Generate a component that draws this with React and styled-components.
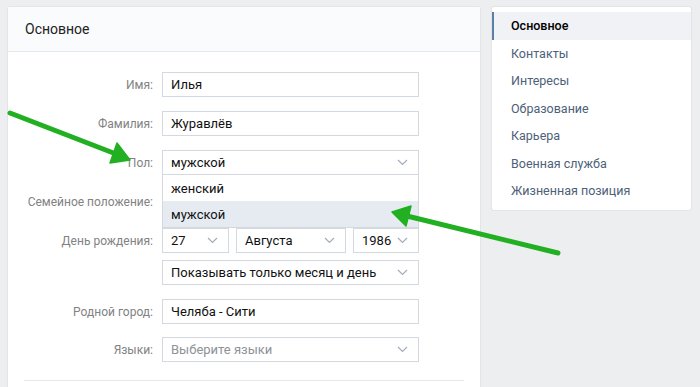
import React from 'react';
import styled, { createGlobalStyle } from 'styled-components';

const GlobalStyle = createGlobalStyle`
  html, body {
    margin: 0;
    padding: 0;
    background: #edeef0;
    font-family: Roboto, "Open Sans", "Liberation Sans", sans-serif;
    -webkit-font-smoothing: antialiased;
  }
`;

const Page = styled.div`
  position: relative;
  display: flex;
  align-items: flex-start;
  gap: 12px;
  padding: 7px 8px 0;
  height: 380px;
  overflow: hidden;
`;

const MainCard = styled.div`
  width: 472px;
  background: #fff;
  border-radius: 2px;
  box-shadow: 0 0 0 1px #e3e4e8;
  padding-bottom: 40px;
`;

const CardHeader = styled.div`
  height: 44px;
  display: flex;
  align-items: center;
  padding-left: 17px;
  background: #fafbfc;
  border-bottom: 1px solid #e7e8ec;
  font-size: 14px;
  color: #222;
`;

const Form = styled.div`
  display: flex;
  flex-direction: column;
  padding-top: 20px;
`;

const Row = styled.div`
  position: relative;
  display: flex;
  align-items: center;
  gap: 9px;
  margin-bottom: ${p => p.$gap ?? 14}px;
`;

const Label = styled.div`
  width: 145px;
  text-align: right;
  font-size: 12px;
  color: #828282;
`;

const Field = styled.div`
  box-sizing: border-box;
  width: ${p => p.$w || 257}px;
  height: 25px;
  display: flex;
  align-items: center;
  justify-content: space-between;
  padding: 0 10px 0 8px;
  border: 1px solid #d3d9de;
  background: #fff;
  font-size: 13px;
  color: ${p => (p.$placeholder ? '#8d9297' : '#111')};
`;

const Controls = styled.div`
  display: flex;
  gap: 7px;
`;

const Dropdown = styled.div`
  position: absolute;
  left: 154px;
  top: 25px;
  width: 257px;
  box-sizing: border-box;
  background: #fff;
  border: 1px solid #d3d9de;
  border-top: none;
  z-index: 2;
`;

const Option = styled.div`
  height: 26px;
  display: flex;
  align-items: center;
  padding-left: 8px;
  font-size: 13px;
  color: #111;
  background: ${p => (p.$active ? '#e5ebf1' : '#fff')};
`;

const Divider = styled.div`
  margin: 5px 16px 0;
  border-top: 1px solid #e7e8ec;
`;

const SideMenu = styled.div`
  width: 199px;
  background: #fff;
  border-radius: 2px;
  box-shadow: 0 0 0 1px #e3e4e8;
  padding: 5px 0;
`;

const MenuItem = styled.div`
  height: 27.5px;
  display: flex;
  align-items: center;
  padding-left: 17px;
  border-left: 2px solid ${p => (p.$active ? '#5b7fa6' : 'transparent')};
  background: ${p => (p.$active ? '#f0f2f5' : 'transparent')};
  font-size: 12.5px;
  font-weight: ${p => (p.$active ? 500 : 400)};
  color: ${p => (p.$active ? '#000' : '#4d6178')};
`;

const Overlay = styled.svg`
  position: absolute;
  left: 0;
  top: 0;
  pointer-events: none;
  z-index: 5;
`;

const Chevron = () => (
  <svg width="11" height="7" viewBox="0 0 11 7">
    <polyline points="1,1 5.5,5.5 10,1" fill="none" stroke="#a3adb8" strokeWidth="1.2" />
  </svg>
);

const Select = ({ children, w, placeholder }) => (
  <Field $w={w} $placeholder={placeholder}>
    <span>{children}</span>
    <Chevron />
  </Field>
);

const menu = ['Основное', 'Контакты', 'Интересы', 'Образование', 'Карьера', 'Военная служба', 'Жизненная позиция'];

export default function App() {
  return (
    <>
      <GlobalStyle />
      <Page>
        <MainCard>
          <CardHeader>Основное</CardHeader>
          <Form>
            <Row>
              <Label>Имя:</Label>
              <Field>Илья</Field>
            </Row>
            <Row>
              <Label>Фамилия:</Label>
              <Field>Журавлёв</Field>
            </Row>
            <Row>
              <Label>Пол:</Label>
              <Select>мужской</Select>
              <Dropdown>
                <Option>женский</Option>
                <Option $active>мужской</Option>
              </Dropdown>
            </Row>
            <Row>
              <Label>Семейное положение:</Label>
              <Select />
            </Row>
            <Row $gap={7}>
              <Label>День рождения:</Label>
              <Controls>
                <Select w={67}>27</Select>
                <Select w={110}>Августа</Select>
                <Select w={66}>1986</Select>
              </Controls>
            </Row>
            <Row>
              <Label />
              <Select>Показывать только месяц и день</Select>
            </Row>
            <Row $gap={13}>
              <Label>Родной город:</Label>
              <Field>Челяба - Сити</Field>
            </Row>
            <Row $gap={13}>
              <Label>Языки:</Label>
              <Select placeholder>Выберите языки</Select>
            </Row>
          </Form>
          <Divider />
        </MainCard>
        <SideMenu>
          {menu.map((m, i) => (
            <MenuItem key={m} $active={i === 0}>{m}</MenuItem>
          ))}
        </SideMenu>
        <Overlay width="700" height="387">
          <g fill="#22b022" stroke="#22b022" strokeLinecap="round" strokeLinejoin="round">
            <line x1="10" y1="113" x2="116" y2="154" strokeWidth="5" />
            <polygon points="130,160 110,163 117,143" strokeWidth="1.5" />
            <line x1="558" y1="253" x2="407" y2="216" strokeWidth="5" />
            <polygon points="392,212 411,206 406,226" strokeWidth="1.5" />
          </g>
        </Overlay>
      </Page>
    </>
  );
}
